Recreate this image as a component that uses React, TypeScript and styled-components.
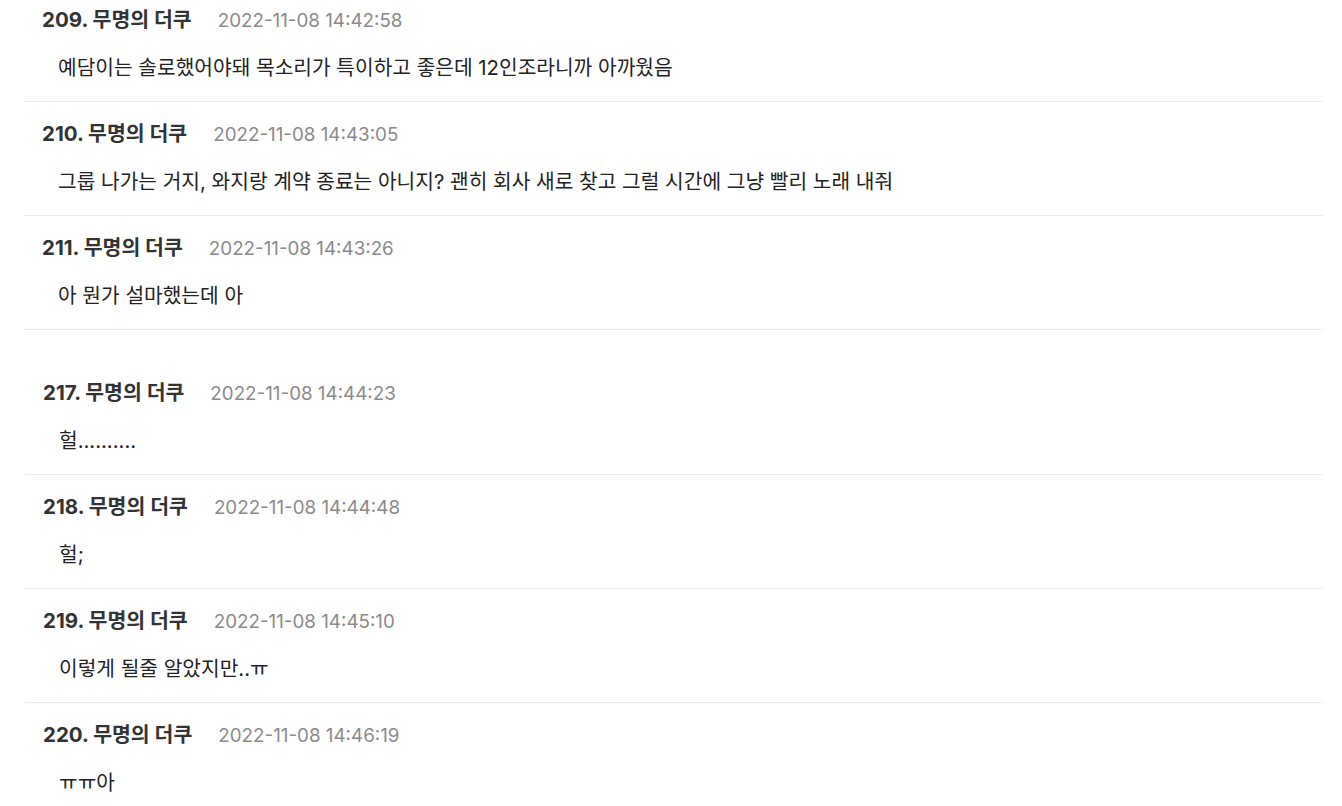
import React from "react";
import styled, { createGlobalStyle } from "styled-components";

const GlobalStyle = createGlobalStyle`
  html, body {
    margin: 0;
    padding: 0;
    background: #ffffff;
    font-family: Inter, "Noto Sans CJK KR", sans-serif;
    overflow: hidden;
  }
`;

const Page = styled.div`
  width: 1342px;
  height: 806px;
  overflow: hidden;
  background: #fff;
`;

const Group = styled.div<{ $shift: number; $top: number }>`
  margin-top: ${(p) => p.$top}px;
  padding-left: ${(p) => 24 + p.$shift}px;
  width: ${(p) => 1299 - p.$shift}px;
`;

const Item = styled.div`
  padding: 18px 0 19px 0;
  border-bottom: 1px solid #ebebeb;
`;

const Header = styled.div`
  display: flex;
  align-items: baseline;
  gap: 26px;
  padding-left: 18px;
  height: 28px;
  line-height: 28px;
`;

const Name = styled.span`
  font-size: 20.5px;
  font-weight: 700;
  color: #333;
`;

const Time = styled.span`
  font-size: 18.8px;
  color: #8a8a8a;
`;

const Body = styled.div`
  padding-left: 34px;
  margin-top: 20px;
  font-size: 20.3px;
  line-height: 28px;
  color: #222;
`;

type Comment = { no: number; time: string; text: string };

const first: Comment[] = [
  { no: 209, time: "2022-11-08 14:42:58", text: "예담이는 솔로했어야돼 목소리가 특이하고 좋은데 12인조라니까 아까웠음" },
  { no: 210, time: "2022-11-08 14:43:05", text: "그룹 나가는 거지, 와지랑 계약 종료는 아니지? 괜히 회사 새로 찾고 그럴 시간에 그냥 빨리 노래 내줘" },
  { no: 211, time: "2022-11-08 14:43:26", text: "아 뭔가 설마했는데 아" },
];

const second: Comment[] = [
  { no: 217, time: "2022-11-08 14:44:23", text: "헐.........." },
  { no: 218, time: "2022-11-08 14:44:48", text: "헐;" },
  { no: 219, time: "2022-11-08 14:45:10", text: "이렇게 될줄 알았지만..ㅠ" },
  { no: 220, time: "2022-11-08 14:46:19", text: "ㅠㅠ아" },
];

const CommentItem = ({ c }: { c: Comment }) => (
  <Item>
    <Header>
      <Name>{c.no}. 무명의 더쿠</Name>
      <Time>{c.time}</Time>
    </Header>
    <Body>{c.text}</Body>
  </Item>
);

export default function App() {
  return (
    <Page>
      <GlobalStyle />
      <Group $shift={0} $top={-12}>
        {first.map((c) => (
          <CommentItem key={c.no} c={c} />
        ))}
      </Group>
      <Group $shift={1} $top={31}>
        {second.map((c) => (
          <CommentItem key={c.no} c={c} />
        ))}
      </Group>
    </Page>
  );
}
